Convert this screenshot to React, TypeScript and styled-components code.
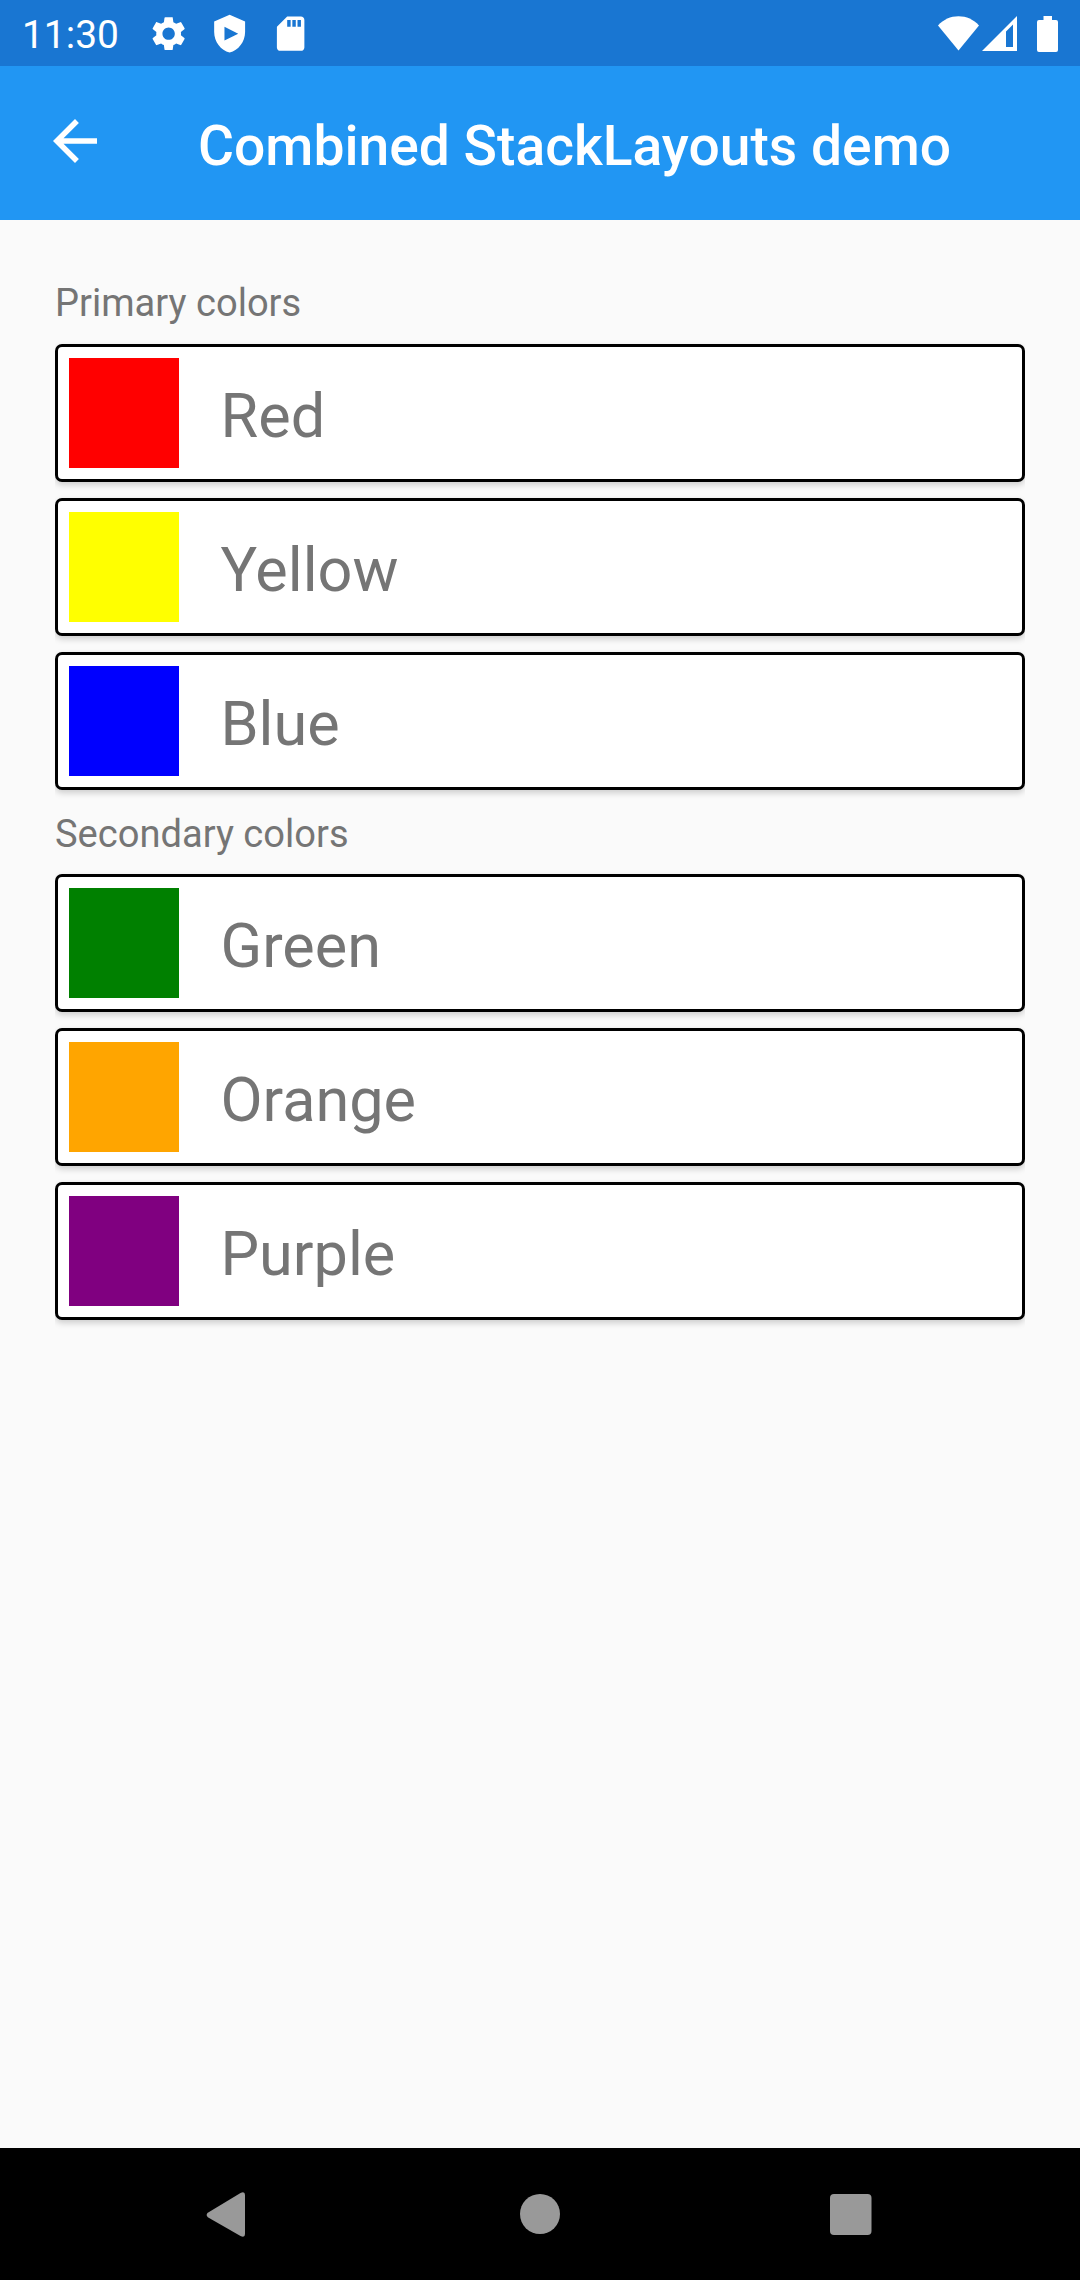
import React from "react";
import styled, { createGlobalStyle } from "styled-components";
import { MdSettings, MdSdCard } from "react-icons/md";

const GlobalStyle = createGlobalStyle`
  * { box-sizing: border-box; }
  body { margin: 0; background: #fafafa; }
`;

const Screen = styled.div`
  display: flex;
  flex-direction: column;
  width: 1080px;
  height: 2280px;
  background: #fafafa;
  font-family: Roboto, "Noto Sans", sans-serif;
`;

const StatusBar = styled.header`
  display: flex;
  align-items: center;
  justify-content: space-between;
  height: 66px;
  padding: 1px 22px 0 22px;
  background: #1976d2;
  color: #fff;
`;

const StatusGroup = styled.div`
  display: flex;
  align-items: center;
  height: 65px;
`;

const Clock = styled.span`
  width: 126px;
  padding-top: 2px;
  font-size: 38.9px;
  line-height: 46px;
`;

const StatusIcon = styled.span<{ $gap?: number }>`
  display: flex;
  margin-right: ${(p) => p.$gap ?? 0}px;
  svg { display: block; }
`;

const AppBar = styled.div`
  display: flex;
  align-items: center;
  height: 154px;
  padding: 0 42px;
  background: #2196f3;
  color: #fff;
`;

const BackButton = styled.button`
  display: flex;
  margin: 0 0 4px;
  padding: 0;
  border: 0;
  background: none;
  color: inherit;
`;

const Title = styled.h1`
  margin: 6px 0 0 90px;
  font-size: 55.2px;
  font-weight: 500;
  line-height: 64px;
  white-space: nowrap;
`;

const Content = styled.main`
  flex: 1;
  display: flex;
  flex-direction: column;
  gap: 16px;
  padding: 55px;
`;

const SectionLabel = styled.h2<{ $height: number }>`
  height: ${(p) => p.$height}px;
  margin: 0;
  color: #757575;
  font-size: 38.1px;
  font-weight: 400;
  line-height: 57px;
`;

const ColorCard = styled.div`
  display: flex;
  align-items: center;
  height: 138px;
  padding: 11px;
  border: 3px solid #000;
  border-radius: 7px;
  background: #fff;
  box-shadow: 0 3px 6px rgba(0, 0, 0, 0.18);
  clip-path: inset(-10px 0 -14px 0);
`;

const Swatch = styled.div<{ $color: string }>`
  width: 110px;
  height: 110px;
  background: ${(p) => p.$color};
`;

const ColorName = styled.span`
  margin-left: 41.5px;
  padding-top: 6px;
  color: #757575;
  font-size: 61.2px;
  line-height: 72px;
`;

const NavBar = styled.nav`
  display: flex;
  align-items: center;
  justify-content: space-between;
  height: 132px;
  padding: 0 208px 0 204px;
  background: #000;
  svg { display: block; }
`;

const sections = [
  {
    label: "Primary colors",
    height: 53,
    colors: [["Red", "#ff0000"], ["Yellow", "#ffff00"], ["Blue", "#0000ff"]],
  },
  {
    label: "Secondary colors",
    height: 52,
    colors: [["Green", "#008000"], ["Orange", "#ffa500"], ["Purple", "#800080"]],
  },
];

export default function App() {
  return (
    <Screen>
      <GlobalStyle />
      <StatusBar>
        <StatusGroup>
          <Clock>11:30</Clock>
          <StatusIcon $gap={20}><MdSettings size={41.25} /></StatusIcon>
          <StatusIcon $gap={19}>
            <svg width="41.25" height="41.25" viewBox="0 0 24 24" fill="#fff">
              <path fillRule="evenodd" d="M12 1 3 5v6c0 5.55 3.84 10.74 9 12 5.16-1.26 9-6.45 9-12V5zM9 8v8l8-4z" />
            </svg>
          </StatusIcon>
          <StatusIcon><MdSdCard size={41.25} /></StatusIcon>
        </StatusGroup>
        <StatusGroup>
          <StatusIcon $gap={3}>
            <svg width="41" height="36" viewBox="0 0 41 36" fill="#fff">
              <path d="M20.5 34.5 0 9.5C5.5 3.5 12.5.3 20.5.3S35.5 3.5 41 9.5z" />
            </svg>
          </StatusIcon>
          <StatusIcon $gap={20}>
            <svg width="35" height="36" viewBox="0 0 35 36" fill="#fff">
              <path fillRule="evenodd" d="M0 35 35 0v35zM24 15.5v15.5h7V8.5z" />
            </svg>
          </StatusIcon>
          <StatusIcon>
            <svg width="21" height="36" viewBox="0 0 21 36" fill="#fff">
              <path d="M6.5 0h8.5v4h4a2 2 0 0 1 2 2v28a2 2 0 0 1-2 2H2a2 2 0 0 1-2-2V6a2 2 0 0 1 2-2h4.5z" />
            </svg>
          </StatusIcon>
        </StatusGroup>
      </StatusBar>
      <AppBar>
        <BackButton aria-label="Back">
          <svg width="66" height="66" viewBox="0 0 24 24" fill="currentColor">
            <path d="M20 11H7.83l5.59-5.59L12 4l-8 8 8 8 1.41-1.41L7.83 13H20z" />
          </svg>
        </BackButton>
        <Title>Combined StackLayouts demo</Title>
      </AppBar>
      <Content>
        {sections.map((section) => (
          <React.Fragment key={section.label}>
            <SectionLabel $height={section.height}>{section.label}</SectionLabel>
            {section.colors.map(([name, color]) => (
              <ColorCard key={name}>
                <Swatch $color={color} />
                <ColorName>{name}</ColorName>
              </ColorCard>
            ))}
          </React.Fragment>
        ))}
      </Content>
      <NavBar>
        <svg width="44" height="46" viewBox="0 0 44 46" fill="#999">
          <path d="M3.8 21.8 36.5 2Q41 0 41 4V43Q41 47 36.5 45L3.8 26.2Q1.5 24 3.8 21.8z" />
        </svg>
        <svg width="42" height="42" viewBox="0 0 42 42" fill="#999">
          <circle cx="22" cy="21" r="20" />
        </svg>
        <svg width="42" height="42" viewBox="0 0 42 42" fill="#999">
          <rect x="0" y="1" width="41.5" height="41" rx="4" />
        </svg>
      </NavBar>
    </Screen>
  );
}
